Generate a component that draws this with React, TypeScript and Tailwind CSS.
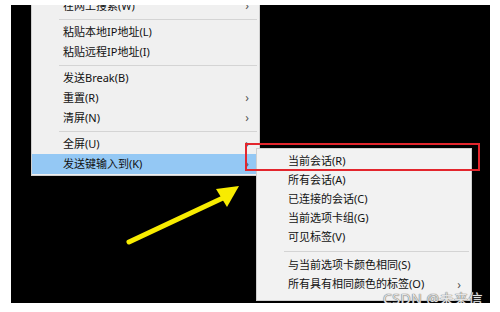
import { ReactNode } from 'react';

type Row = { label: string; arrow?: boolean; active?: boolean } | 'sep';

const mainMenu: Row[] = [
  { label: '在网上搜索(W)', arrow: true },
  'sep',
  { label: '粘贴本地IP地址(L)' },
  { label: '粘贴远程IP地址(I)' },
  'sep',
  { label: '发送Break(B)' },
  { label: '重置(R)', arrow: true },
  { label: '清屏(N)', arrow: true },
  'sep',
  { label: '全屏(U)', arrow: true },
  { label: '发送键输入到(K)', arrow: true, active: true },
];

const subMenu: Row[] = [
  { label: '当前会话(R)' },
  { label: '所有会话(A)' },
  { label: '已连接的会话(C)' },
  { label: '当前选项卡组(G)' },
  { label: '可见标签(V)' },
  'sep',
  { label: '与当前选项卡颜色相同(S)' },
  { label: '所有具有相同颜色的标签(O)', arrow: true },
];

function MenuRows({ rows, rowH, sepH }: { rows: Row[]; rowH: string; sepH: string }): ReactNode {
  return rows.map((row, idx) => {
    if (row === 'sep') {
      return (
        <div key={idx} className={`${sepH} flex items-center pl-[27px] pr-[2px]`}>
          <div className="h-px w-full bg-[#d4d4d4]" />
        </div>
      );
    }
    return (
      <div
        key={row.label}
        className={`${rowH} flex items-center justify-between pl-[31px] pr-[10px] ${row.active ? 'bg-[#94c8f4]' : ''}`}
      >
        <span>{row.label}</span>
        {row.arrow && <span className="text-[12px] text-[#555]">›</span>}
      </div>
    );
  });
}

export default function App() {
  return (
    <div
      className="w-[500px] h-[312px] bg-white pt-[5px] pl-[11px] text-[11px] text-[#111]"
      style={{ fontFamily: '"Noto Sans", "Noto Sans CJK SC", sans-serif' }}
    >
      <div className="relative w-[479px] h-[298px] bg-black overflow-hidden">
        {/* main context menu */}
        <div className="absolute left-[20px] top-[-10px] w-[229px] bg-[#f0f0f0] border border-[#cfcfcf] pb-px flex flex-col">
          <MenuRows rows={mainMenu} rowH="h-[20px]" sepH="h-[6px]" />
        </div>

        {/* submenu */}
        <div className="absolute left-[245px] top-[143px] w-[216px] bg-[#f2f2f2] border border-[#cfcfcf] pt-[3px] pb-[6px] flex flex-col">
          <MenuRows rows={subMenu} rowH="h-[19px]" sepH="h-[9px]" />
        </div>

        {/* red highlight box */}
        <div className="absolute left-[234px] top-[138px] w-[235px] h-[28px] border-2 border-[#e3262d]" />

        {/* yellow arrow */}
        <svg className="absolute left-0 top-0" width="479" height="298" viewBox="0 0 479 298">
          <line x1="118" y1="237" x2="214" y2="192" stroke="#f8ec00" strokeWidth="5" strokeLinecap="round" />
          <polygon points="228,181 205,184 216,202" fill="#f8ec00" />
        </svg>

        {/* watermark */}
        <div className="absolute right-[7px] bottom-[-5px] text-[14px] leading-[18px] tracking-[0.5px] text-[#e4e4e4] [text-shadow:0_0_1px_#666,0_0_1px_#666]">
          CSDN @未来信
        </div>
      </div>
    </div>
  );
}
